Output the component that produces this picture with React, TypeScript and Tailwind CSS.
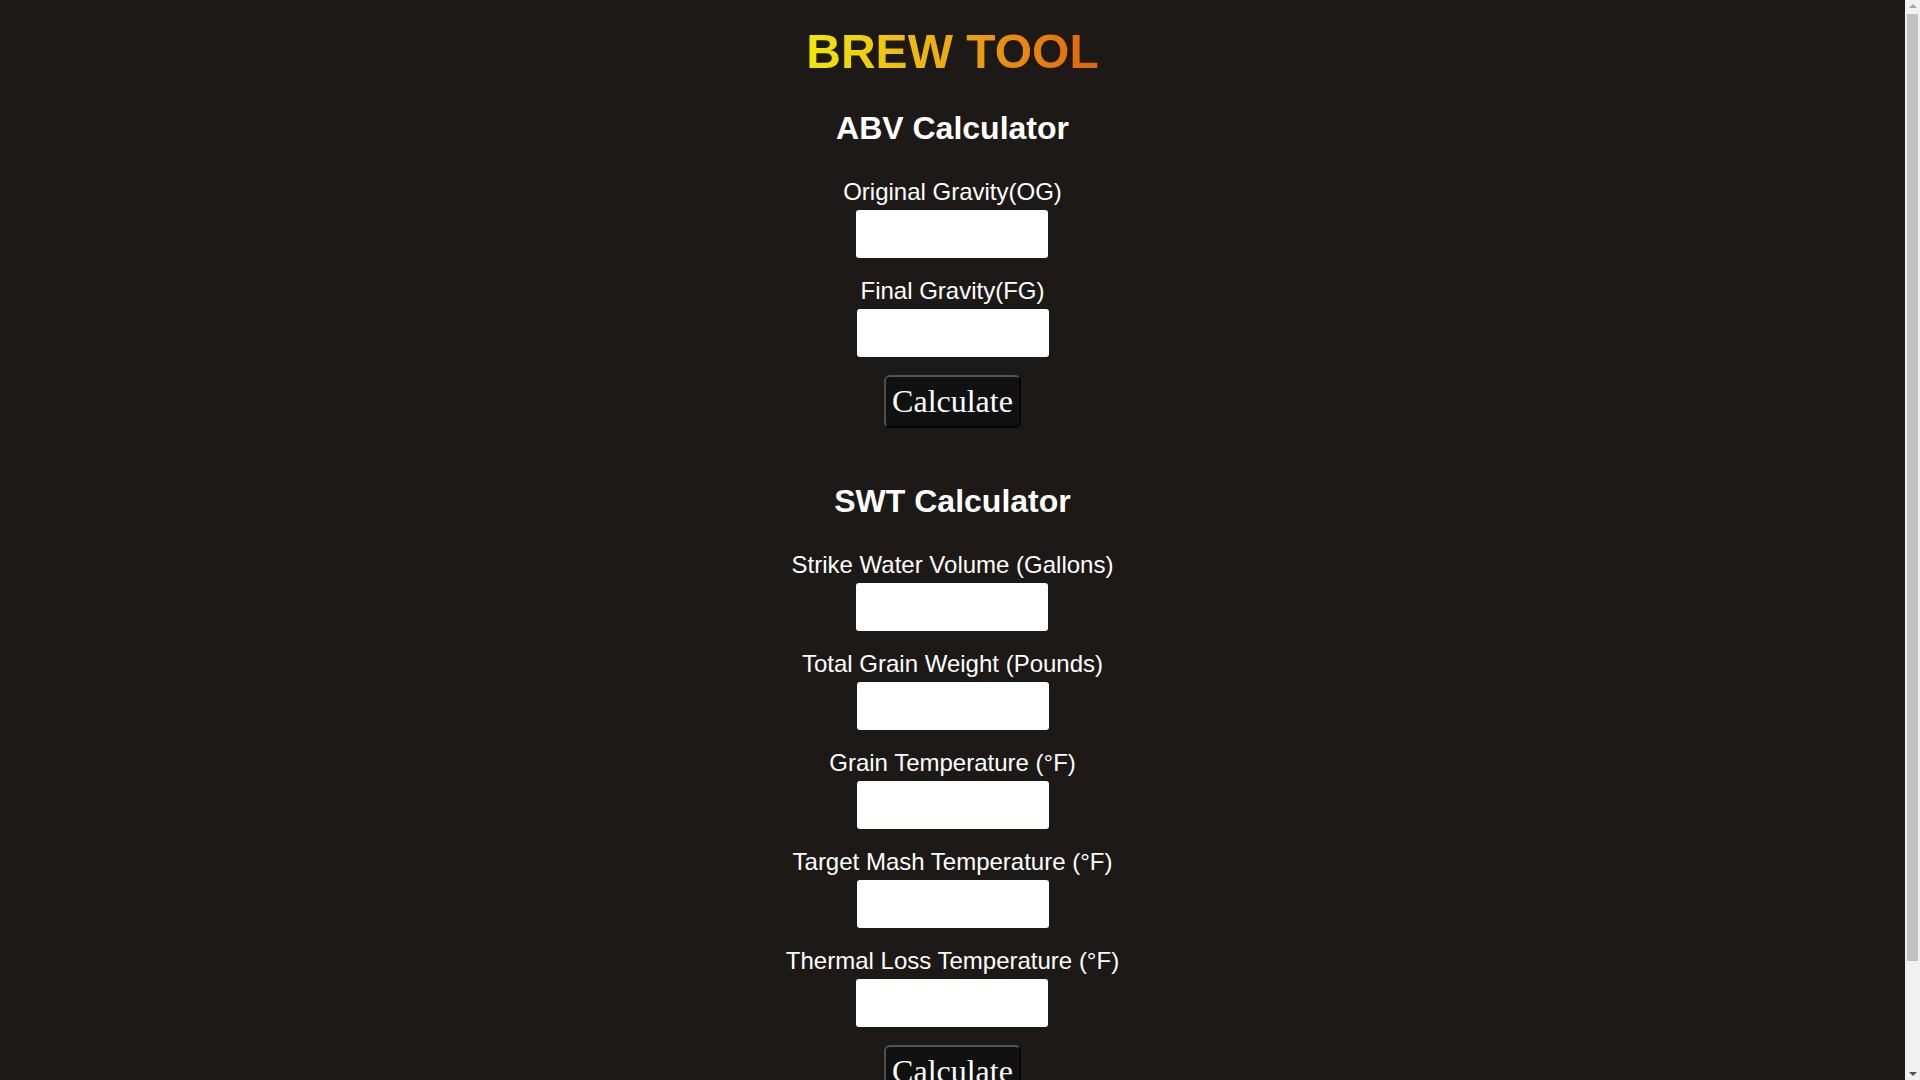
import { useState } from "react";

const abvFields = ["Original Gravity(OG)", "Final Gravity(FG)"];

const swtFields = [
  "Strike Water Volume (Gallons)",
  "Total Grain Weight (Pounds)",
  "Grain Temperature (°F)",
  "Target Mash Temperature (°F)",
  "Thermal Loss Temperature (°F)",
];

function Field({ label }: { label: string }) {
  const [value, setValue] = useState("");
  return (
    <div className="flex flex-col items-center">
      <label className="block text-[24px] leading-[23px] text-white">{label}</label>
      <input
        value={value}
        onChange={(e) => setValue(e.target.value)}
        className="mt-[7px] mb-[21px] h-[48px] w-[192px] rounded-[3px] bg-white px-2 text-black outline-none"
      />
    </div>
  );
}

function CalcButton() {
  return (
    <button
      type="button"
      className="-mt-[3px] rounded-[6px] border-2 border-t-[#555555] border-l-[#4d4d4d] border-r-[#050505] border-b-[#050505] bg-[#111111] p-[6px] font-['Liberation_Serif',serif] text-[32px] leading-[37px] text-white"
    >
      Calculate
    </button>
  );
}

// stand-in for the browser's classic scrollbar gutter seen in the screenshot
function ScrollGutter() {
  return (
    <div className="flex h-screen w-[15px] shrink-0 flex-col items-center bg-[#f1f1f1] py-[4px]">
      <div className="h-0 w-0 border-x-[4px] border-b-[4px] border-x-transparent border-b-[#a3a3a3]" />
      <div className="mt-[6px] h-[947px] w-[11px] bg-[#c1c1c1]" />
      <div className="flex-1" />
      <div className="h-0 w-0 border-x-[4px] border-t-[4px] border-x-transparent border-t-[#505050]" />
    </div>
  );
}

export default function App() {
  return (
    <div className="flex h-screen overflow-hidden bg-[#1c1917] font-['Liberation_Sans',Arial,sans-serif]">
      <div className="flex flex-1 flex-col items-center pt-[24px] pb-10">
        <h1 className="bg-gradient-to-r from-[#efe90a] to-[#e0620f] bg-clip-text text-[48px] leading-[55px] font-bold text-transparent">
          BREW TOOL
        </h1>

        <h2 className="mt-[31px] mb-[33px] text-[32px] leading-[37px] font-bold text-white">ABV Calculator</h2>
        {abvFields.map((f) => (
          <Field key={f} label={f} />
        ))}
        <CalcButton />

        <h2 className="mt-[55px] mb-[33px] text-[32px] leading-[37px] font-bold text-white">SWT Calculator</h2>
        {swtFields.map((f) => (
          <Field key={f} label={f} />
        ))}
        <CalcButton />
      </div>
      <ScrollGutter />
    </div>
  );
}
